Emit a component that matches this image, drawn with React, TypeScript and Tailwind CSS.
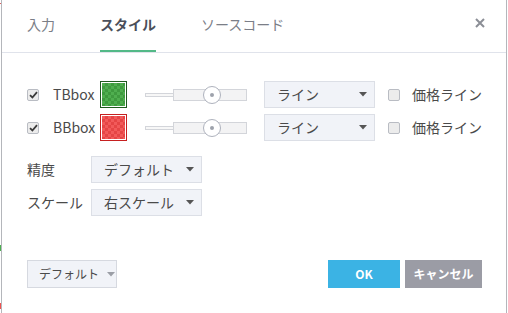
import { JSX } from 'react'

const font = { fontFamily: '"Noto Sans CJK JP", "Noto Sans", sans-serif' }

function Check({ checked }: { checked: boolean }): JSX.Element {
  return (
    <span className="flex h-[12px] w-[12px] items-center justify-center rounded-[2px] border border-[#b9bcc3] bg-[#ececec]">
      {checked && (
        <svg width="9" height="8" viewBox="0 0 9 8">
          <path d="M1 4.2 L3.4 6.5 L8 1.2" fill="none" stroke="#3a3a3a" strokeWidth="1.8" />
        </svg>
      )}
    </span>
  )
}

function Caret({ color = '#555' }: { color?: string }): JSX.Element {
  return (
    <svg width="8" height="5" viewBox="0 0 8 5">
      <path d="M0 0 L8 0 L4 4.5 Z" fill={color} />
    </svg>
  )
}

function Slider(): JSX.Element {
  return (
    <div className="relative flex h-[20px] w-[102px] items-center">
      <div className="h-[4px] w-[28px] border border-r-0 border-[#d3d5da] bg-[#f7f7f7]" />
      <div className="h-[12px] flex-1 border border-[#d3d5da] bg-[#f3f3f4]" />
      {/* thumb */}
      <div className="absolute left-[58px] top-[1px] flex h-[18px] w-[18px] items-center justify-center rounded-full border border-[#aeb2bd] bg-white">
        <span className="h-[4px] w-[4px] rounded-full bg-[#9ea2ac]" />
      </div>
    </div>
  )
}

function Select({ label, width }: { label: string; width: string }): JSX.Element {
  return (
    <div className={`flex h-[27px] ${width} items-center justify-between border border-[#dcdfe6] bg-[#f1f3f8] pl-[12px] pr-[7px] text-[14px] text-[#4a4a4a]`}>
      <span>{label}</span>
      <Caret />
    </div>
  )
}

function BoxRow({ name, checker, edge }: { name: string; checker: string; edge: string }): JSX.Element {
  return (
    <div className="flex h-[27px] items-center">
      <Check checked />
      <span className="ml-[14px] w-[47px] text-[14px] text-[#4a4a4a]">{name}</span>
      <div className={`h-[27px] w-[27px] border ${edge} bg-white p-[1px]`}>
        <div className={`h-full w-full ${checker} bg-[length:6px_6px]`} />
      </div>
      <div className="ml-[18px]">
        <Slider />
      </div>
      <div className="ml-[17px]">
        <Select label="ライン" width="w-[111px]" />
      </div>
      <div className="ml-[13px]">
        <Check checked={false} />
      </div>
      <span className="ml-[12px] text-[14px] text-[#4a4a4a]">価格ライン</span>
    </div>
  )
}

export default function App(): JSX.Element {
  return (
    <div className="flex h-[313px] w-[508px] overflow-hidden bg-white" style={font}>
      {/* chart fragments left of the dialog */}
      <div className="flex w-[1px] flex-col">
        <div className="mt-[3px] h-[1px] bg-[#e06060]" />
        <div className="mt-[241px] h-[6px] bg-[#4caf50]" />
        <div className="mt-[52px] h-[6px] bg-[#ef5350]" />
      </div>

      <div className="flex w-[506px] flex-col border-x border-[#b4b6bb] bg-white">
        {/* header tabs */}
        <div className="flex h-[53px] items-stretch border-b border-[#e0e3eb] pl-[25px] pr-[21px]">
          <div className="flex gap-[45px] text-[14px]">
            <div className="flex items-center border-b-2 border-transparent pb-[2px] text-[#7b7e87]">入力</div>
            <div className="flex items-center border-b-2 border-[#53b987] pb-[2px] font-bold text-[#4b4f5a]">スタイル</div>
            <div className="flex items-center border-b-2 border-transparent pb-[2px] text-[#7b7e87]">ソースコード</div>
          </div>
          <div className="ml-auto flex items-center pb-[6px]">
            <svg width="10" height="10" viewBox="0 0 10 10">
              <path d="M1 1 L9 9 M9 1 L1 9" stroke="#8b8e96" strokeWidth="2" />
            </svg>
          </div>
        </div>

        {/* body */}
        <div className="flex flex-1 flex-col pl-[25px] pr-[24px] pt-[28px]">
          <div className="flex flex-col gap-[6px]">
            <BoxRow
              name="TBbox"
              edge="border-[#1f5a1f]"
              checker="bg-[conic-gradient(#3f9a3f_25%,#4fae4f_0_50%,#3f9a3f_0_75%,#4fae4f_0)]"
            />
            <BoxRow
              name="BBbox"
              edge="border-[#c62020]"
              checker="bg-[conic-gradient(#e54545_25%,#f25a5a_0_50%,#e54545_0_75%,#f25a5a_0)]"
            />
          </div>

          <div className="mt-[15px] flex flex-col gap-[6px] text-[14px] text-[#4a4a4a]">
            <div className="flex items-center">
              <span className="w-[64px]">精度</span>
              <Select label="デフォルト" width="w-[111px]" />
            </div>
            <div className="flex items-center">
              <span className="w-[64px]">スケール</span>
              <Select label="右スケール" width="w-[111px]" />
            </div>
          </div>

          <div className="mt-[44px] flex items-center">
            <div className="flex h-[28px] w-[90px] items-center gap-[8px] border border-[#d6d9e0] bg-[#f1f3f8] pl-[11px] text-[12px] text-[#4a4a4a]">
              <span>デフォルト</span>
              <Caret color="#9b9ea6" />
            </div>
            <div className="ml-auto flex gap-[5px] text-[12px] font-bold text-white">
              <div className="flex h-[28px] w-[72px] items-center justify-center bg-[#3bb3e4]">OK</div>
              <div className="flex h-[28px] w-[77px] items-center justify-center bg-[#9b9ca5]">キャンセル</div>
            </div>
          </div>
        </div>
      </div>
    </div>
  )
}
